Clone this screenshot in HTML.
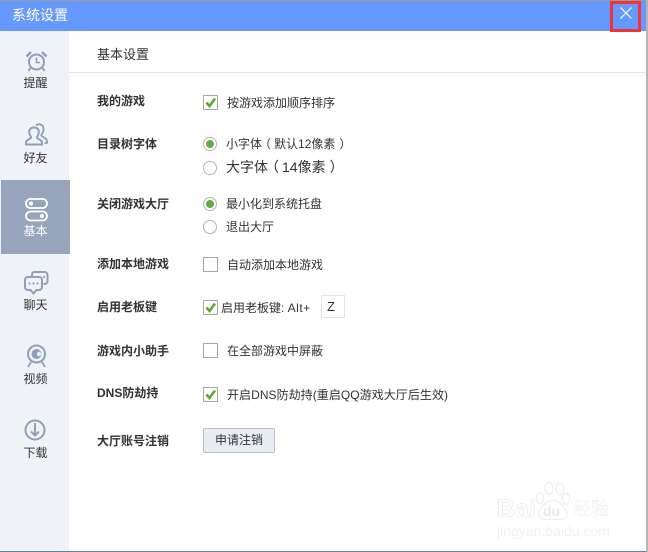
<!DOCTYPE html>
<html lang="zh-CN">
<head>
<meta charset="utf-8">
<style>
html,body{margin:0;padding:0;background:#fff}
body{width:648px;height:552px;position:relative;overflow:hidden;font-family:"Liberation Sans","Noto Sans CJK SC",sans-serif;font-size:12px;color:#333}
.a{position:absolute;white-space:nowrap}
.t{position:absolute;white-space:nowrap;line-height:16px;height:16px}
.b{font-weight:bold;color:#333}
.l{position:relative;left:-3px}
.r{position:relative;left:4px}
.side{position:absolute;left:1px;width:69px;text-align:center;line-height:16px;color:#333}
.cb{position:absolute;width:13px;height:13px;border:1px solid #a6a6a6;background:#fff}
.cb svg{position:absolute;left:0;top:0}
.rd{position:absolute;width:12px;height:12px;border:1px solid #b4b4b4;border-radius:50%;background:#fff}
.rd.on:after{content:"";position:absolute;left:2px;top:2px;width:8px;height:8px;border-radius:50%;background:#62ab3e}
svg.i{position:absolute;fill:none;stroke:#8e9fb8;stroke-width:2}
.w{-webkit-text-stroke:.6px #e6e6e6;color:#fff}
</style>
</head>
<body>
<div class="a" style="left:0;top:0;width:648px;height:1px;background:#9a9a9a"></div>
<div class="a" style="left:0;top:1px;width:646px;height:30px;background:#6699ff"></div>
<div class="t" style="left:12px;top:7px;color:#fff;font-size:14px">系统设置</div>

<div class="a" style="left:0;top:31px;width:69px;height:520px;background:#eff3f7"></div>
<div class="a" style="left:1px;top:180px;width:69px;height:74px;background:#98a4bb"></div>
<div class="a" style="left:69px;top:72px;width:577px;height:1px;background:#e3e3e3"></div>
<div class="a" style="left:646px;top:0;width:2px;height:552px;background:#b5b5b5"></div>
<div class="a" style="left:0;top:551px;width:646px;height:1px;background:#5d7fc0"></div>

<!-- close button -->
<div class="a" style="left:610px;top:1px;width:31px;height:31px;box-sizing:border-box;border:3px solid #f23333"></div>
<svg class="a" style="left:619px;top:6px" width="14" height="14"><path d="M1.500 1.500L12.500 12.500M12.500 1.500L1.500 12.500" stroke="#fff" stroke-width="1.200" fill="none"/></svg>

<!-- sidebar icons -->
<svg class="i" style="left:25px;top:50px" width="23" height="23" viewBox="0 0 23 23">
<circle cx="11.500" cy="12" r="7.500"/>
<path d="M11.500 7.500V12.500H15" stroke-width="1.600"/>
<path d="M1.500 6.500L6 2M17 2L21.500 6.500" stroke-width="2.400"/>
<path d="M5.500 18L3.500 21M17.500 18L19.500 21"/>
</svg>
<div class="side" style="top:75px">提醒</div>

<svg class="i" style="left:24px;top:123px" width="25" height="23" viewBox="0 0 25 23">
<path d="M10 4.500C6 4.500 4.800 7.500 5.300 10.200C5.700 12 7 13.200 7 14.500C7 16 2 16.500 2 19.500V21.500H18V19.500C18 16.500 13 16 13 14.500C13 13.200 14.300 12 14.700 10.200C15.200 7.500 14 4.500 10 4.500Z"/>
<path d="M12 2.500C13.500 1.200 15.500 .8 17.300 1.800C19.800 3.200 20 6.500 19 9C18.400 10.500 17.300 11.200 17.300 12.500C17.300 14 23 14.500 23 18V20H20.500" stroke-width="1.800"/>
</svg>
<div class="side" style="top:150px">好友</div>

<svg class="a" style="left:25px;top:198px" width="23" height="24" viewBox="0 0 23 24" fill="none" stroke="#fff" stroke-width="1.800">
<rect x="1" y="1" width="21" height="9" rx="4.500"/>
<rect x="1" y="13.500" width="21" height="9" rx="4.500"/>
<circle cx="6" cy="5.500" r="2" fill="#fff" stroke="none"/>
<circle cx="17" cy="18" r="2" fill="#fff" stroke="none"/>
</svg>
<div class="side" style="top:223px;color:#fff">基本</div>

<svg class="i" style="left:24px;top:271px" width="25" height="24" viewBox="0 0 25 24" stroke-width="1.700">
<path d="M4 6H15C16.700 6 18 7.300 18 9V16C18 17.700 16.700 19 15 19H12.500L9.500 22.500L6.500 19H4C2.300 19 1 17.700 1 16V9C1 7.300 2.300 6 4 6Z"/>
<path d="M8 5V3.500C8 2.100 9 1 10.500 1H20.500C22.200 1 23.500 2.300 23.500 4V10C23.500 11.700 22.200 13 20.500 13H19.500"/>
<circle cx="5.500" cy="12.500" r="1.100" fill="#8e9fb8" stroke="none"/>
<circle cx="9.500" cy="12.500" r="1.100" fill="#8e9fb8" stroke="none"/>
<circle cx="13.500" cy="12.500" r="1.100" fill="#8e9fb8" stroke="none"/>
<circle cx="20" cy="6" r="1.100" fill="#8e9fb8" stroke="none"/>
</svg>
<div class="side" style="top:297px">聊天</div>

<svg class="i" style="left:25px;top:344px" width="23" height="24" viewBox="0 0 23 24">
<circle cx="11.500" cy="10" r="8.500" stroke-width="2"/>
<circle cx="11.500" cy="10" r="5" fill="#8e9fb8" stroke="none"/>
<circle cx="14" cy="10" r="2.200" fill="#eff3f7" stroke="none"/>
<path d="M6 18L3 23M17 18L20 23" stroke-width="1.800"/>
</svg>
<div class="side" style="top:371px">视频</div>

<svg class="i" style="left:24px;top:419px" width="22" height="22" viewBox="0 0 22 22" stroke-width="1.700">
<circle cx="11" cy="11" r="9.500"/>
<path d="M11 4V16M7 12.500L11 16.500L15 12.500"/>
</svg>
<div class="side" style="top:445px">下载</div>

<!-- content -->
<div class="t" style="left:97px;top:47px;font-size:13px">基本设置</div>

<div class="t b" style="left:97px;top:93px">我的游戏</div>
<div class="cb" style="left:203px;top:95px"><svg width="13" height="13"><path d="M2.500 6.500L5.500 10L11 2.500" stroke="#5fa82f" stroke-width="2.600" fill="none"/></svg></div>
<div class="t" style="left:227px;top:95px">按游戏添加顺序排序</div>

<div class="t b" style="left:97px;top:136px">目录树字体</div>
<div class="rd on" style="left:203px;top:137px"></div>
<div class="t" style="left:226px;top:136px">小字体<span class="l">（</span>默认12像素<span class="r">）</span></div>
<div class="rd" style="left:203px;top:161px"></div>
<div class="t" style="left:226px;top:159px;font-size:14px">大字体<span class="l">（</span>14像素<span class="r">）</span></div>

<div class="t b" style="left:97px;top:196px">关闭游戏大厅</div>
<div class="rd on" style="left:203px;top:197px"></div>
<div class="t" style="left:226px;top:196px">最小化到系统托盘</div>
<div class="rd" style="left:203px;top:220px"></div>
<div class="t" style="left:226px;top:219px">退出大厅</div>

<div class="t b" style="left:97px;top:256px">添加本地游戏</div>
<div class="cb" style="left:203px;top:257px"></div>
<div class="t" style="left:227px;top:257px">自动添加本地游戏</div>

<div class="t b" style="left:97px;top:299px">启用老板键</div>
<div class="cb" style="left:203px;top:300px"><svg width="13" height="13"><path d="M2.500 6.500L5.500 10L11 2.500" stroke="#5fa82f" stroke-width="2.600" fill="none"/></svg></div>
<div class="t" style="left:221px;top:300px">启用老板键: <span style="letter-spacing:.5px">Alt+</span></div>
<div class="a" style="left:321px;top:295px;width:17px;height:21px;padding-left:5px;border:1px solid #e0e3ea;line-height:21px;font-size:13px;background:#fff">Z</div>

<div class="t b" style="left:97px;top:343px">游戏内小助手</div>
<div class="cb" style="left:203px;top:343px"></div>
<div class="t" style="left:227px;top:343px">在全部游戏中屏蔽</div>

<div class="t b" style="left:97px;top:385px">DNS防劫持</div>
<div class="cb" style="left:203px;top:387px"><svg width="13" height="13"><path d="M2.500 6.500L5.500 10L11 2.500" stroke="#5fa82f" stroke-width="2.600" fill="none"/></svg></div>
<div class="t" style="left:227px;top:387px;letter-spacing:.05px">开启DNS防劫持(重启QQ游戏大厅后生效)</div>

<div class="t b" style="left:97px;top:433px">大厅账号注销</div>
<div class="a" style="left:203px;top:428px;width:70px;height:23px;border:1px solid #b9bcc2;border-radius:2px;background:#e8edf4;text-align:center;line-height:23px">申请注销</div>

<!-- watermark -->
<div class="a w" style="left:497px;top:496px;font-size:25px;font-weight:bold;line-height:26px">Bai</div>
<svg class="a" style="left:534px;top:481px" width="40" height="44" viewBox="0 0 40 44" fill="#fff" stroke="#ebebeb" stroke-width="1">
<ellipse cx="6" cy="17" rx="3.500" ry="5.500"/>
<ellipse cx="15" cy="7.500" rx="4" ry="6"/>
<ellipse cx="26" cy="8" rx="4" ry="6"/>
<ellipse cx="32" cy="18" rx="3.500" ry="5.500"/>
<path d="M19 19C25 19 34 29 33 34C32 39 26 39 19 38C12 39 6 39 5 34C4 29 13 19 19 19Z"/>
</svg>
<div class="a" style="left:543px;top:503px;font-size:14px;font-weight:bold;color:#e9e9e9;line-height:16px">du</div>
<div class="a w" style="left:573px;top:498px;font-size:18px;line-height:22px;-webkit-text-stroke:.3px #e4e4e4">经验</div>
<div class="a" style="left:497px;top:523px;font-size:14px;color:#f0f0f0;line-height:16px">jingyan.baidu.com</div>
</body>
</html>
